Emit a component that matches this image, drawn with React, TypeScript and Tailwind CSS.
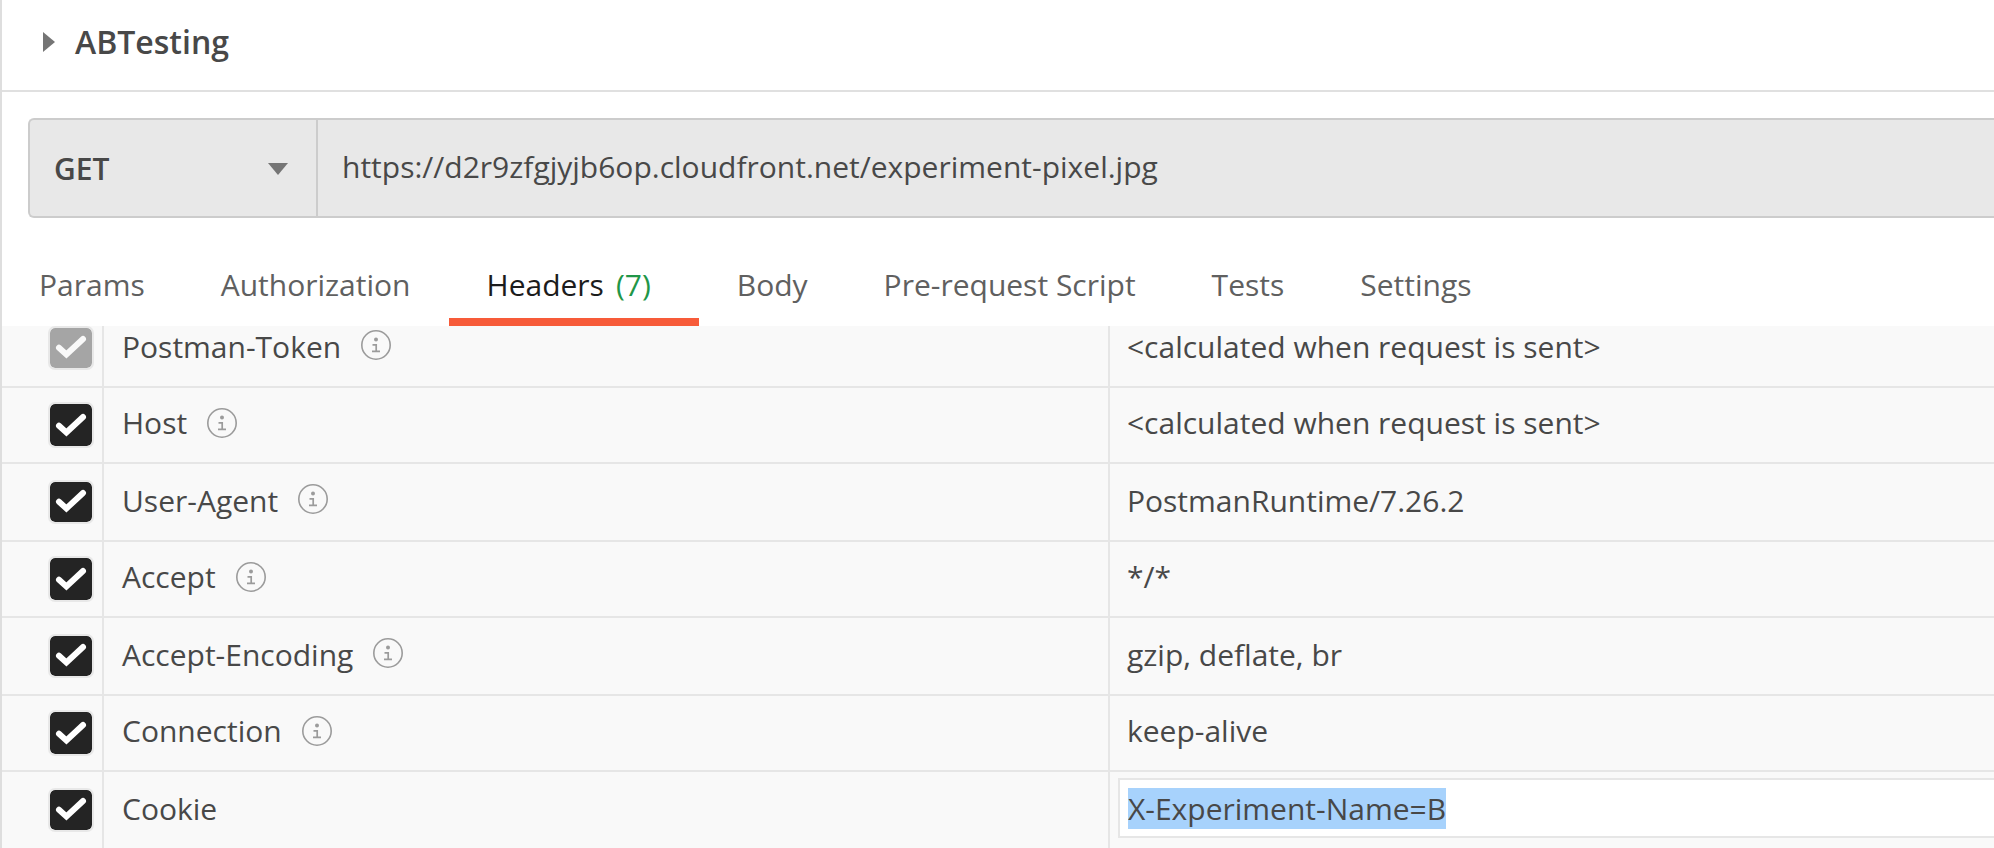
import { useEffect, useRef } from "react";

type HeaderRow = {
  name: string;
  value: string;
  info: boolean;
  disabled?: boolean;
  editable?: boolean;
};

const rows: HeaderRow[] = [
  { name: "Postman-Token", value: "<calculated when request is sent>", info: true, disabled: true },
  { name: "Host", value: "<calculated when request is sent>", info: true },
  { name: "User-Agent", value: "PostmanRuntime/7.26.2", info: true },
  { name: "Accept", value: "*/*", info: true },
  { name: "Accept-Encoding", value: "gzip, deflate, br", info: true },
  { name: "Connection", value: "keep-alive", info: true },
  { name: "Cookie", value: "X-Experiment-Name=B", info: false, editable: true },
];

const tabs = [
  { label: "Params" },
  { label: "Authorization" },
  { label: "Headers", count: 7 },
  { label: "Body" },
  { label: "Pre-request Script" },
  { label: "Tests" },
  { label: "Settings" },
];

function InfoIcon() {
  return (
    <svg viewBox="0 0 30 30" className="size-[30px] shrink-0" fill="none" stroke="#9b9b9b" aria-hidden="true">
      <circle cx="15" cy="15" r="14.2" strokeWidth="1.6" />
      <circle cx="15" cy="9.4" r="2" fill="#9b9b9b" stroke="none" />
      <path d="M11.5 14.8h3.7v6.6M11 21.4h8" strokeWidth="1.7" />
    </svg>
  );
}

function CheckBox({ label, disabled, tall }: { label: string; disabled?: boolean; tall: boolean }) {
  return (
    <label className={tall ? "grid w-[42px] pt-[18px]" : "grid w-[42px] pt-4"}>
      <input
        type="checkbox"
        defaultChecked
        disabled={disabled}
        aria-label={label}
        className={`col-start-1 row-start-1 w-[42px] appearance-none rounded-[5px] outline-2 outline-[#e8e8e8] ${
          tall ? "h-10" : "h-[42px]"
        } ${disabled ? "bg-[#a5a5a5]" : "bg-[#242424]"}`}
      />
      <svg
        viewBox="0 0 42 42"
        className={`pointer-events-none col-start-1 row-start-1 size-[42px] ${tall ? "-mt-[2px]" : ""}`}
        fill="none"
        stroke={disabled ? "#f9f9f9" : "#ffffff"}
        strokeWidth="6"
        strokeLinecap="round"
        aria-hidden="true"
      >
        <path d="M9 21.8l7.4 6.6L33 13" />
      </svg>
    </label>
  );
}

function CookieInput({ value }: { value: string }) {
  const ref = useRef<HTMLInputElement>(null);
  useEffect(() => {
    ref.current?.focus({ preventScroll: true });
    ref.current?.select();
  }, []);
  return (
    <input
      ref={ref}
      type="text"
      aria-label="Cookie value"
      defaultValue={value}
      className="block h-[60px] w-full border-2 border-r-0 border-[#e6e6e6] bg-white pl-2 leading-10 caret-transparent outline-none selection:bg-[#a6d2fcfd] selection:text-[#484848]"
    />
  );
}

export default function App() {
  return (
    <main className="flex h-screen flex-col overflow-hidden border-l-2 border-[#dedede] bg-white font-['Open_Sans',sans-serif] text-[30px] leading-10 text-[#484848]">
      <header className="shrink-0 border-b-2 border-[#e0e0e0]">
        <button type="button" className="flex h-[90px] items-center pb-[6px] pl-[41px] text-[32px] font-semibold">
          <svg viewBox="0 0 12 20" className="mr-5 h-5 w-3" fill="#757575" aria-hidden="true">
            <path d="M0 0l12 10L0 20z" />
          </svg>
          ABTesting
        </button>
      </header>

      <form className="mt-[26px] ml-[26px] flex h-[100px] shrink-0 rounded-l-[6px] border-2 border-r-0 border-[#cccccc] bg-[#e8e8e8]">
        <div className="grid w-[288px] shrink-0 items-center border-r-2 border-[#cccccc] pt-[2px]">
          <select
            aria-label="Request method"
            className="col-start-1 row-start-1 h-full w-full appearance-none bg-transparent pl-6 font-semibold outline-none"
          >
            <option>GET</option>
          </select>
          <svg
            viewBox="0 0 20 12"
            className="pointer-events-none col-start-1 row-start-1 mr-7 h-3 w-5 justify-self-end"
            fill="#757575"
            aria-hidden="true"
          >
            <path d="M0 0h20L10 12z" />
          </svg>
        </div>
        <input
          type="text"
          aria-label="Request URL"
          defaultValue="https://d2r9zfgjyjb6op.cloudfront.net/experiment-pixel.jpg"
          className="min-w-0 flex-1 bg-transparent pb-[2px] pl-6 outline-none"
        />
      </form>

      <div role="tablist" className="flex h-[108px] shrink-0 items-end text-[#606060]">
        {tabs.map((tab, i) => (
          <button
            key={tab.label}
            type="button"
            role="tab"
            aria-selected={tab.count !== undefined}
            className={`flex border-b-8 pb-[13px] whitespace-nowrap ${i === 0 ? "pl-[37px]" : "pl-[38px]"} ${
              tab.count !== undefined ? "border-[#f75b39] pr-12 text-[#1c1c1c]" : "border-transparent pr-[38px]"
            }`}
          >
            {tab.label}
            {tab.count !== undefined && <span className="ml-3 text-[#1f9648]">({tab.count})</span>}
          </button>
        ))}
      </div>

      <section className="min-h-0 flex-1 overflow-hidden bg-[#f9f9f9]">
        <table className="-mt-4 w-full table-fixed border-separate border-spacing-0">
          <colgroup>
            <col className="w-[102px]" />
            <col className="w-[50.5%]" />
            <col />
          </colgroup>
          <tbody>
            {rows.map((row, i) => {
              const tall = i % 2 === 0;
              return (
                <tr key={row.name} className={tall ? "h-[78px]" : "h-[76px]"}>
                  <td className="border-r-2 border-b-2 border-[#e6e6e6] p-0 pl-12 align-top">
                    <CheckBox label={row.name} disabled={row.disabled} tall={tall} />
                  </td>
                  <td className="border-r-2 border-b-2 border-[#e6e6e6] p-0 pl-[18px] align-top">
                    <div className="flex gap-5">
                      <span className={tall ? "pt-[17px]" : "pt-[15px]"}>{row.name}</span>
                      {row.info && (
                        <button type="button" aria-label={`About ${row.name}`} className="flex pt-5">
                          <InfoIcon />
                        </button>
                      )}
                    </div>
                  </td>
                  {row.editable ? (
                    <td className="border-b-2 border-[#e6e6e6] p-0 pt-[6px] pl-2 align-top">
                      <CookieInput value={row.value} />
                    </td>
                  ) : (
                    <td className="border-b-2 border-[#e6e6e6] p-0 pl-[17px] align-top">
                      <div className={tall ? "pt-[17px]" : "pt-[15px]"}>{row.value}</div>
                    </td>
                  )}
                </tr>
              );
            })}
          </tbody>
        </table>
      </section>
    </main>
  );
}
